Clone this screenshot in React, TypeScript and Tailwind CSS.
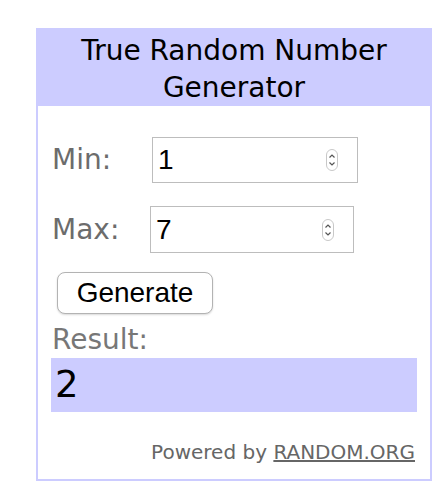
import React from "react";

const verdana = { fontFamily: '"DejaVu Sans", Verdana, sans-serif' };
const helv = { fontFamily: '"Liberation Sans", Arial, sans-serif' };

function Spinner() {
  return (
    <svg width="12" height="22" viewBox="0 0 12 22" className="shrink-0">
      <rect x="0.5" y="0.5" width="11" height="21" rx="5.5" fill="#fff" stroke="#c8c8c8" />
      <path d="M3.5 8.5 L6 6 L8.5 8.5" fill="none" stroke="#555" strokeWidth="1.2" />
      <path d="M3.5 13.5 L6 16 L8.5 13.5" fill="none" stroke="#555" strokeWidth="1.2" />
    </svg>
  );
}

function NumberField({ label, value, labelWidth, width, height }: { label: string; value: string; labelWidth: string; width: string; height: string }) {
  return (
    <div className="flex items-center">
      <span className={`${labelWidth} text-[28px] text-[#6c6c6c]`} style={verdana}>
        {label}
      </span>
      <div className={`${width} ${height} flex items-center border border-[#bdbdbd] pl-[5px] pr-[19px]`}>
        <span className="flex-1 text-[28px] text-black leading-none" style={helv}>
          {value}
        </span>
        <Spinner />
      </div>
    </div>
  );
}

export default function App() {
  return (
    <div className="w-[447px] h-[497px] bg-white pt-[28px] pl-[36px]">
      <div className="w-[396px] flex flex-col" style={verdana}>
        {/* header */}
        <div className="bg-[#ccccff] pt-[4px] text-center text-[28px] leading-[37px] text-black">
          True Random Number
          <br />
          Generator
        </div>

        {/* body */}
        <div className="border-2 border-t-0 border-[#ccccff] px-[13px] pt-[31px] pb-[15px] flex flex-col">
          <div className="pl-[1px]">
            <NumberField label="Min:" value="1" labelWidth="w-[100px]" width="w-[206px]" height="h-[46px]" />
          </div>
          <div className="pl-[1px] mt-[23px]">
            <NumberField label="Max:" value="7" labelWidth="w-[98px]" width="w-[204px]" height="h-[47px]" />
          </div>

          <button
            className="mt-[19px] ml-[6px] w-[156px] h-[42px] rounded-[8px] border border-[#b3b3b3] bg-white shadow-[0_1px_2px_rgba(0,0,0,0.15)] text-[28px] text-black flex items-center justify-center"
            style={helv}
          >
            Generate
          </button>

          <div className="mt-[9px] pl-[1px] text-[28px] leading-[34px] text-[#777]">Result:</div>

          <div className="mt-[1px] h-[54px] bg-[#ccccff] pl-[4px] text-[37px] leading-[54px] text-black">2</div>

          <div className="mt-[28px] pr-[2px] text-right text-[20px] leading-[24px] text-[#666]">
            Powered by <span className="underline">RANDOM.ORG</span>
          </div>
        </div>
      </div>
    </div>
  );
}
